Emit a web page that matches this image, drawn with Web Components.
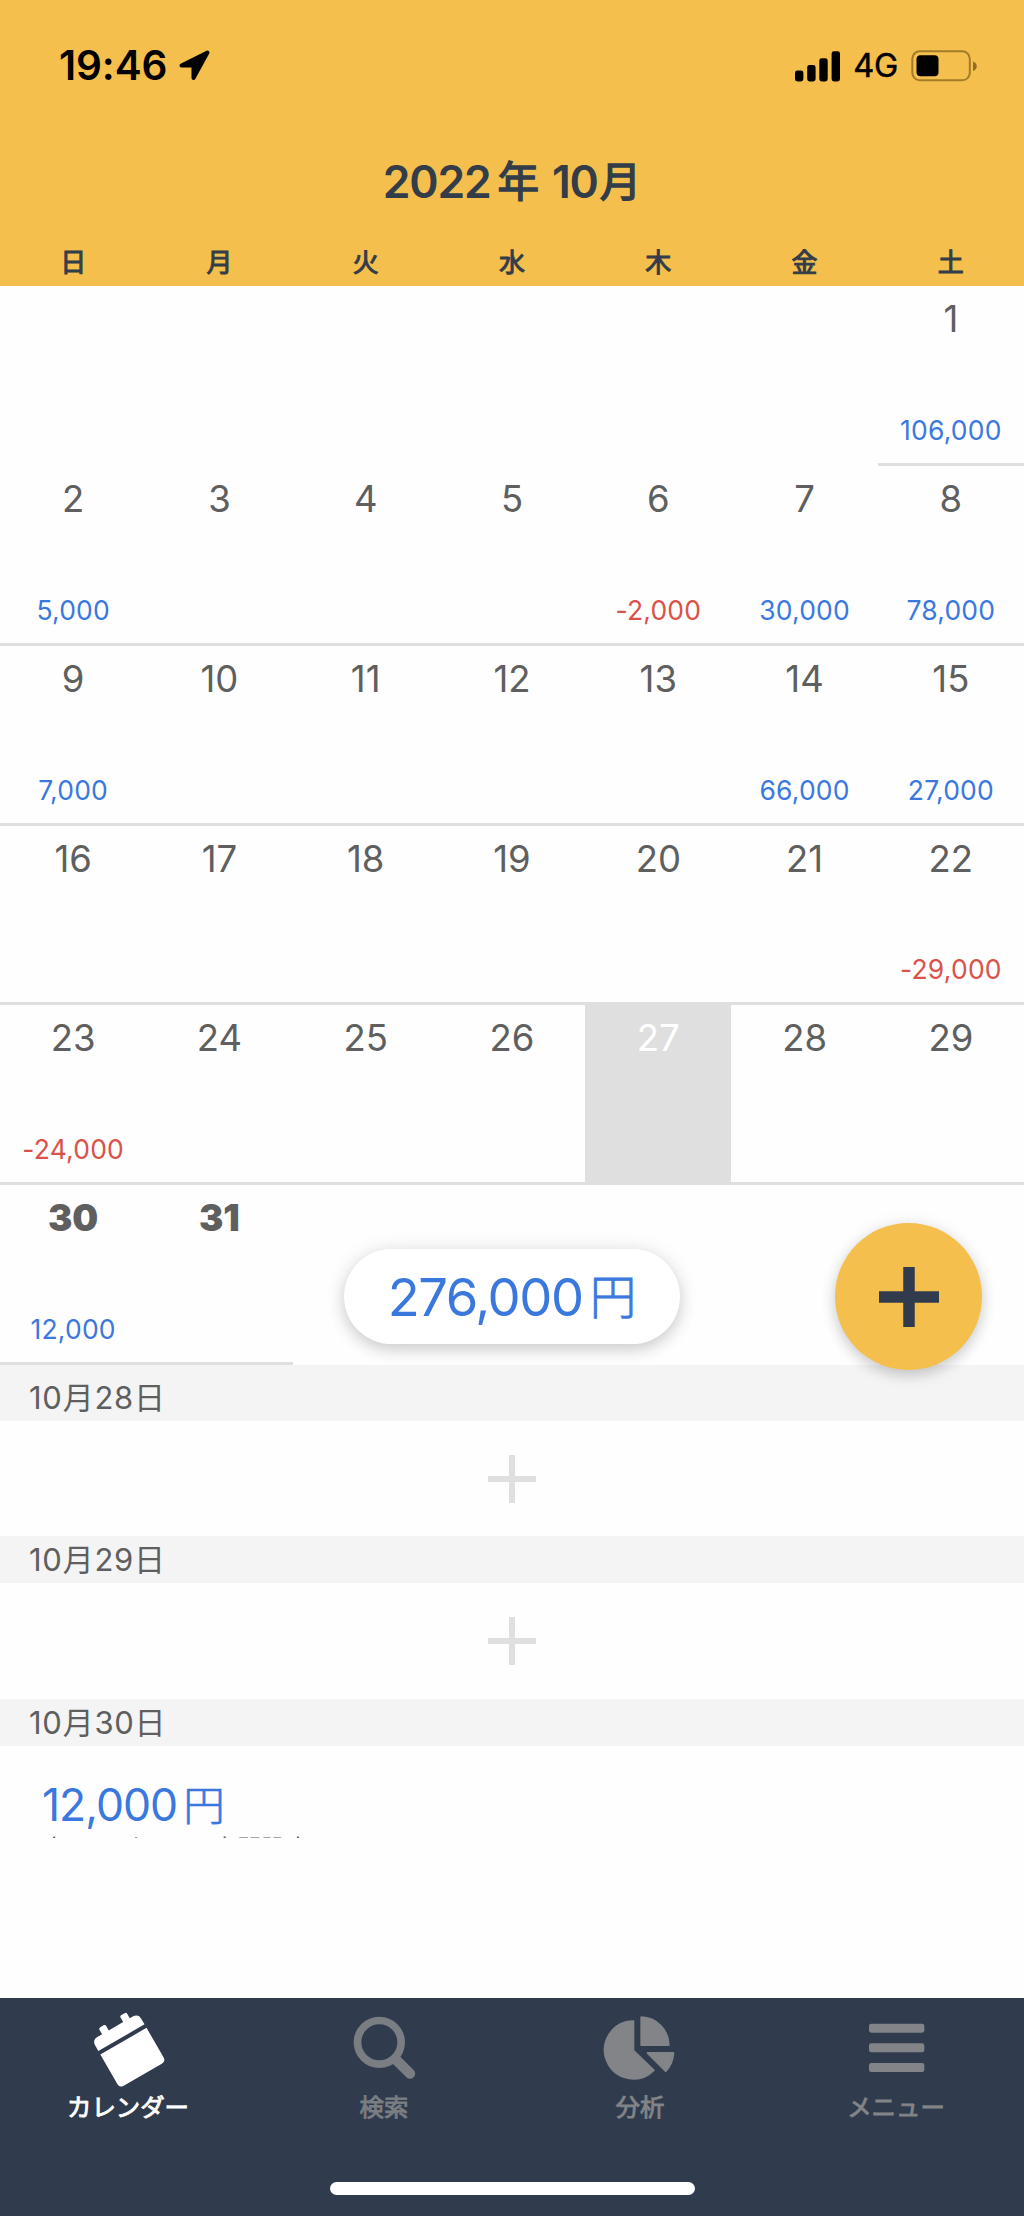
<!DOCTYPE html>
<html lang="ja">
<head>
<meta charset="utf-8">
<title>カレンダー</title>
<style>
html,body{margin:0;padding:0}
body{width:1024px;height:2216px;background:#fefefe;font-family:Inter,"Noto Sans CJK JP",sans-serif;overflow:hidden}
</style>
</head>
<body>
<budget-app></budget-app>
<script>
const define = (name, render) => customElements.define(name, class extends HTMLElement {
  constructor(){ super(); this.attachShadow({mode:'open'}); }
  connectedCallback(){ this.shadowRoot.innerHTML = render(this); }
});

define('status-bar', () => `
<style>
:host{display:flex;height:132px;padding:0 46px 0 59px;box-sizing:border-box;align-items:flex-start;justify-content:space-between;color:#000}
.side{display:flex;align-items:center;height:40px;margin-top:46px}
.time{font-size:40.5px;font-weight:600;letter-spacing:-.1px;line-height:40px}
.net{font-size:32.5px;font-weight:400;-webkit-text-stroke:.5px #000;line-height:40px;letter-spacing:-.3px}
svg{display:block}
</style>
<div class="side"><span class="time">19:46</span>
<svg width="34" height="34" viewBox="0 0 34 34" style="margin-left:11px"><path d="M29.5 3.5 L3.5 16.5 H15.5 V29 Z" fill="#000" stroke="#000" stroke-width="4" stroke-linejoin="round"/></svg></div>
<div class="side">
<svg width="46" height="31" viewBox="0 0 46 31"><rect x="0" y="19.5" width="8.4" height="11" rx="2.4"/><rect x="12.2" y="14" width="8.4" height="16.5" rx="2.4"/><rect x="24.3" y="7.3" width="8.4" height="23.2" rx="2.4"/><rect x="36.6" y="0.3" width="8.4" height="30.2" rx="2.4"/></svg>
<span class="net" style="margin-left:12px">4G</span>
<svg width="67" height="32" viewBox="0 0 67 32" style="margin-left:13px"><rect x="1.3" y="1.3" width="57.5" height="29" rx="7.5" fill="none" stroke="#a27c2b" stroke-width="2"/><rect x="5.5" y="5.3" width="22" height="21" rx="4"/><path d="M62 11.5c5 1.5 5 8 0 9.5z" fill="#8f6e28"/></svg>
</div>`);

define('month-title', () => `
<style>
:host{display:flex;height:100px;align-items:center;justify-content:center;color:#333d49;font-size:44.5px;font-weight:600;line-height:60px;white-space:pre}
.d{letter-spacing:-1.2px}
.y,.m{font-weight:400;font-size:41.5px;-webkit-text-stroke:1.5px currentColor}
.y{margin:0 13px 0 7px}
.m{margin-left:2px}
</style><span class="d">2022</span><span class="y">年</span><span class="d">10</span><span class="m">月</span>`);

define('week-header', () => `
<style>
:host{display:grid;grid-template-columns:repeat(7,1fr);height:54px;text-align:center;color:#333d49;font:400 26px/58px "Noto Sans CJK JP",sans-serif;-webkit-text-stroke:1px currentColor}
</style>${[...'日月火水木金土'].map(d=>`<span>${d}</span>`).join('')}`);

define('day-cell', el => {
  const n = el.getAttribute('day'), a = el.getAttribute('amount') || '';
  return `
<style>
:host{display:flex;flex-direction:column;justify-content:space-between;align-items:center;box-sizing:border-box;border-bottom:3px solid #dfdfdf;padding:11px 0 17px;color:#5f5f5f}
:host([today]){background:#dfdfdf;color:#fff}
:host([bold]) .n{font-weight:900}
.n{font-size:36.5px;line-height:44px}
.a{font-size:26.5px;line-height:32px;letter-spacing:.2px;color:${a.startsWith('-')?'#d9534a':'#3b78de'}}
</style><span class="n">${n}</span><span class="a">${a}</span>`;
});

define('month-grid', () => {
  const amounts = {1:'106,000',2:'5,000',6:'-2,000',7:'30,000',8:'78,000',9:'7,000',14:'66,000',15:'27,000',22:'-29,000',23:'-24,000',30:'12,000'};
  let cells = '<i></i>'.repeat(6);
  for (let d=1; d<=31; d++) cells += `<day-cell day="${d}"${amounts[d]?` amount="${amounts[d]}"`:''}${d===27?' today':''}${d>29?' bold':''}></day-cell>`;
  return `
<style>
:host{display:grid;grid-template-columns:repeat(7,1fr);grid-auto-rows:179.85px;background:#fefefe}
</style>${cells}`;
});

define('date-header', () => `
<style>
:host{display:flex;align-items:flex-end;height:47px;box-sizing:border-box;padding:0 0 4px 29px;background:#f4f4f4;color:#5f5f5f;font-size:31px;line-height:38px;letter-spacing:.75px;font-family:Inter,"Noto Sans CJK JP",sans-serif;font-weight:400}
:host([first]){height:56px}
</style><slot></slot>`);

define('empty-entry', () => `
<style>:host{display:flex;height:115.4px;align-items:center;justify-content:center}svg{display:block}</style>
<svg width="48" height="48" viewBox="0 0 48 48"><path d="M24 0V48M0 24H48" stroke="#dfdfdf" stroke-width="6"/></svg>`);

define('money-entry', () => `
<style>
:host{display:block;height:92px;overflow:hidden;box-sizing:border-box}
.a{display:flex;align-items:baseline;padding-left:42px;padding-top:31px;height:53px;font-size:44.5px;line-height:56px;letter-spacing:-1px;color:#3b78de}
.a slot[name=unit]{font-size:41.5px;font-weight:300;-webkit-text-stroke:.7px currentColor}
.a ::slotted([slot=unit]){margin-left:6px}
.memo{padding-left:42px;font:400 24.4px/34px "Noto Sans CJK JP",sans-serif;color:#5b5b5b;white-space:pre}
</style><div class="a"><slot name="amount"></slot><slot name="unit"></slot></div><div class="memo"><slot name="memo"></slot></div>`);

define('total-pill', () => `
<style>
:host{position:absolute;left:344px;top:1249px;width:336px;height:95px;border-radius:48px;background:#fff;box-shadow:0 6px 16px rgba(0,0,0,.16),0 0 22px rgba(0,0,0,.07);display:flex;align-items:center;justify-content:center;color:#3b78de;font-size:52.5px;line-height:64px}
.v{letter-spacing:-1.4px}
.u{font-size:46.5px;font-weight:300;margin-left:7px;-webkit-text-stroke:.8px currentColor}
</style><span class="v">276,000</span><span class="u">円</span>`);

define('add-button', () => `
<style>
:host{position:absolute;left:835px;top:1223px;width:147px;height:147px;border-radius:50%;background:#f4bf4c;box-shadow:0 6px 14px rgba(0,0,0,.16),0 0 18px rgba(0,0,0,.07);display:flex;align-items:center;justify-content:center}
svg{display:block}
</style><svg width="60" height="60" viewBox="0 0 60 60"><path d="M30 0V60M0 30H60" stroke="#303c4e" stroke-width="11.5"/></svg>`);

const icons = {
  calendar:['264 84 240 240','<g transform="translate(301 223.5) rotate(-30)"><path d="M0 0H160V102Q160 116 146 116H14Q0 116 0 102Z"/><path d="M0 -12V-30Q0 -50 20 -50H35V-65Q35 -71 41 -71H52Q58 -71 58 -65V-50H108V-65Q108 -71 114 -71H125Q131 -71 131 -65V-50H141Q160 -50 160 -31V-12Z"/></g>'],
  search:['1032 84 240 240','<circle cx="1138" cy="187" r="65.5" fill="none" stroke="currentColor" stroke-width="23"/><path d="M1190 241L1230 281" stroke="currentColor" stroke-width="31" stroke-linecap="round"/>'],
  pie:['264 84 240 240','<g stroke="currentColor" stroke-width="6" stroke-linejoin="round"><path d="M364 124A86 86 0 1 0 425 271L364 212Z"/><path d="M388 112A84 84 0 0 1 470 195H388Z"/><path d="M407 219H484A84 84 0 0 1 461 273Z"/></g>'],
  menu:['1032 84 240 240','<rect x="1071" y="131" width="166" height="27" rx="7"/><rect x="1071" y="190" width="166" height="27" rx="7"/><rect x="1071" y="249" width="166" height="27" rx="7"/>']
};
define('tab-item', el => {
  const [box, art] = icons[el.getAttribute('icon')];
  return `
<style>
:host{display:flex;flex-direction:column;align-items:center;padding-top:10px;color:#828487}
:host([icon=search]){color:#7a7d82}
:host([active]){color:#fff}
svg{display:block}
span{font:400 24.4px/36px "Noto Sans CJK JP",sans-serif;white-space:nowrap;-webkit-text-stroke:.9px currentColor}
</style><svg width="80" height="80" viewBox="${box}" fill="currentColor">${art}</svg><span><slot></slot></span>`;
});

define('tab-bar', () => `
<style>
:host{display:flex;flex-direction:column;align-items:center;justify-content:space-between;height:218px;background:#303c4e;padding-bottom:21px;box-sizing:border-box}
nav{display:grid;grid-template-columns:repeat(4,1fr);width:100%}
.home{width:365px;height:13px;border-radius:7px;background:#fff}
</style><nav>
<tab-item icon="calendar" active>カレンダー</tab-item><tab-item icon="search">検索</tab-item><tab-item icon="pie">分析</tab-item><tab-item icon="menu">メニュー</tab-item>
</nav><div class="home"></div>`);

define('budget-app', () => `
<style>
:host{display:flex;flex-direction:column;position:relative;width:1024px;height:2216px;background:#fefefe}
header{background:#f4bf4c;height:286px;flex:none}
main{flex:1}
</style>
<header><status-bar></status-bar><month-title></month-title><week-header></week-header></header>
<month-grid></month-grid>
<main>
<date-header first>10月28日</date-header><empty-entry></empty-entry>
<date-header>10月29日</date-header><empty-entry></empty-entry>
<date-header>10月30日</date-header>
<money-entry><span slot="amount">12,000</span><span slot="unit">円</span><span slot="memo">楽団ーバイトー中間設定</span></money-entry>
</main>
<tab-bar></tab-bar>
<total-pill></total-pill><add-button></add-button>`);
</script>
</body>
</html>
